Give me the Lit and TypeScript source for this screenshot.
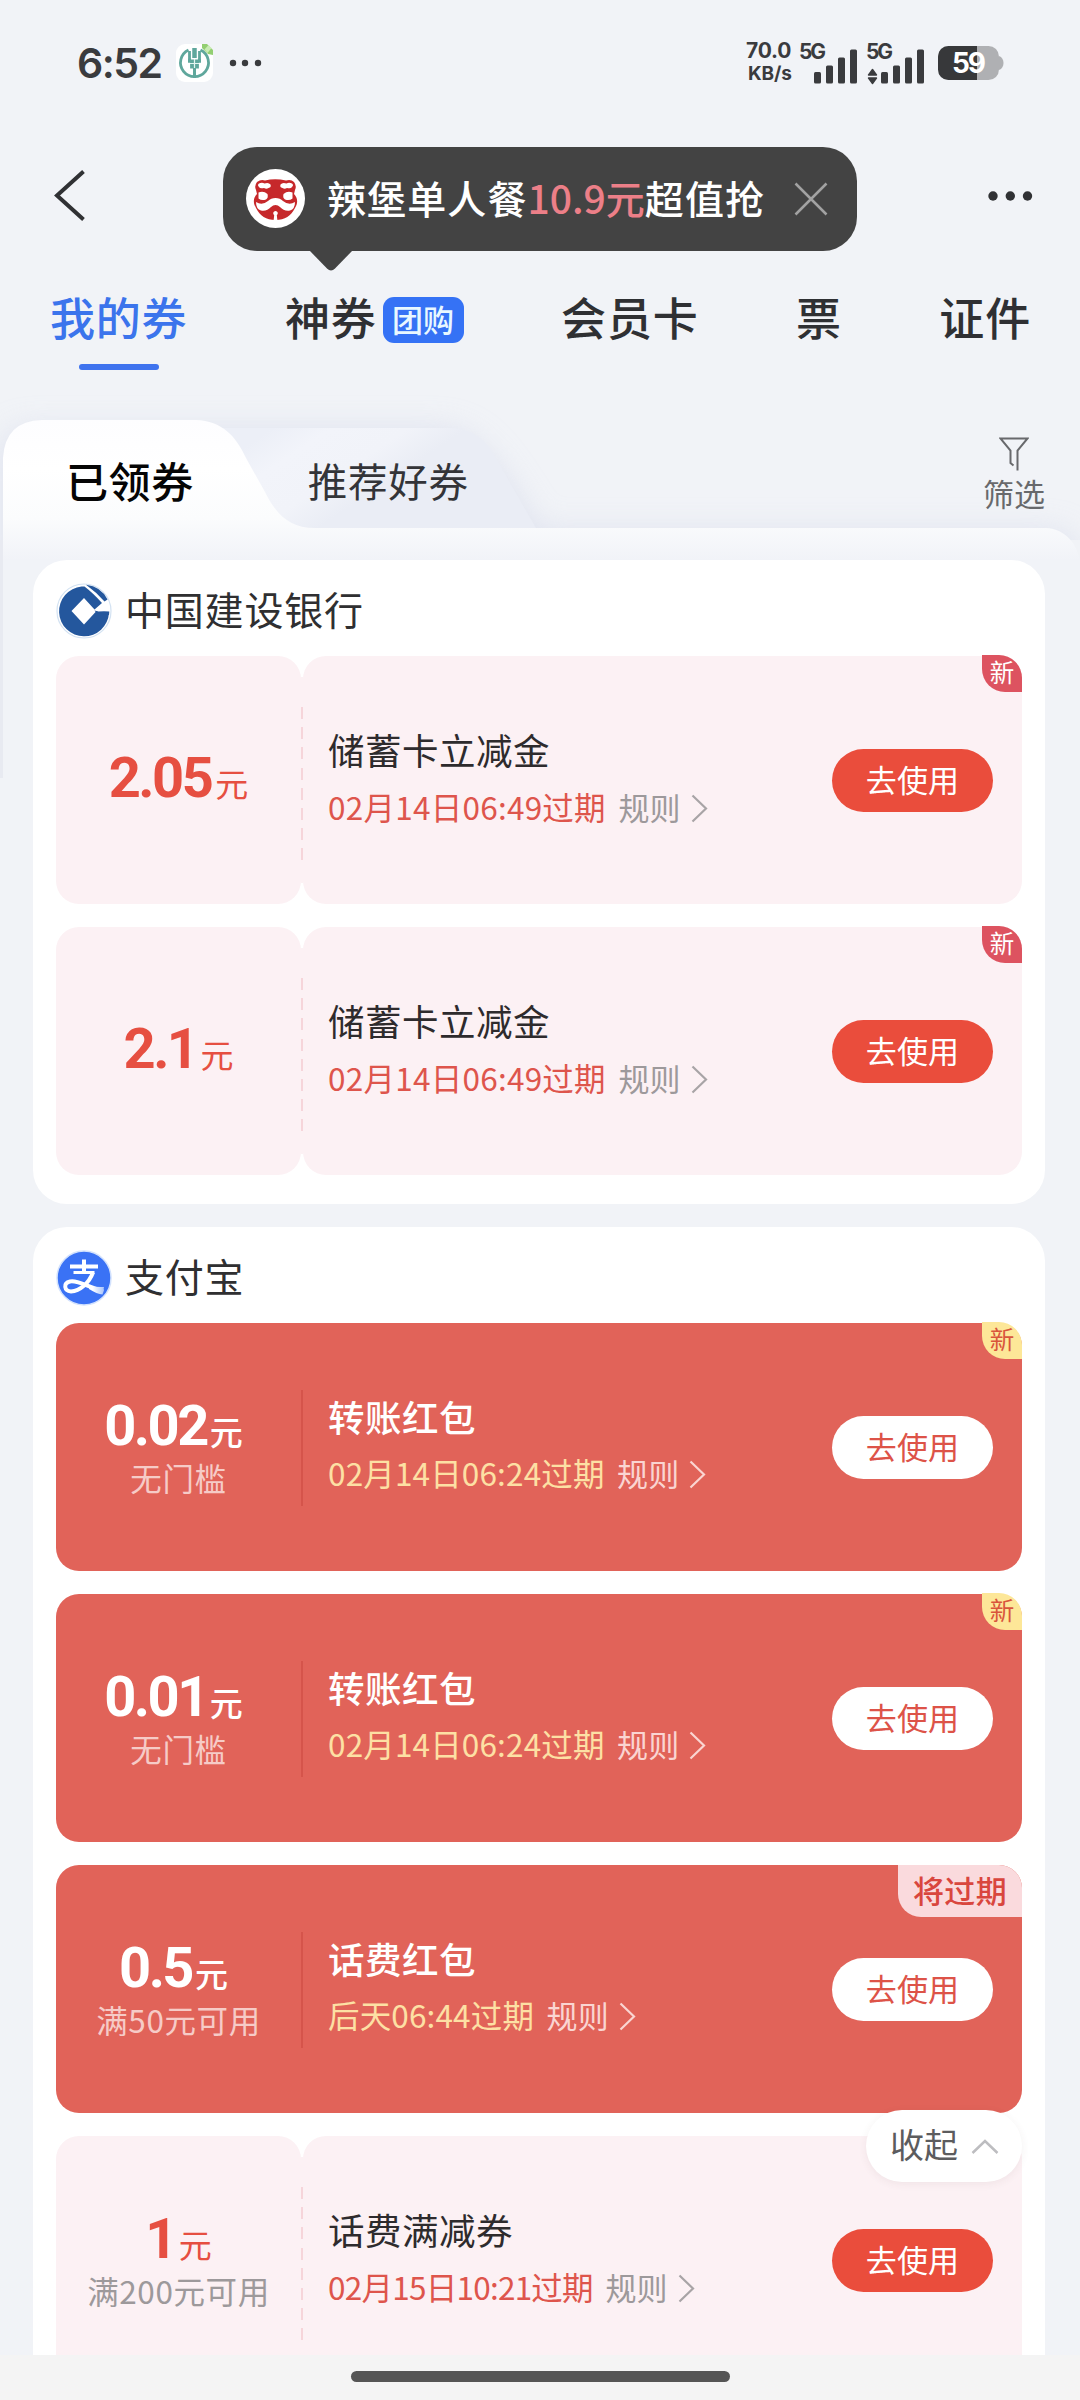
import { LitElement, html, css, svg, nothing } from "lit";
import { customElement, property } from "lit/decorators.js";
import { classMap } from "lit/directives/class-map.js";

interface Coupon {
  kind: "light" | "solid";
  amount: string;
  condition?: string;
  title: string;
  expiry: string;
  tight?: boolean;
  badge?: "new" | "soon";
}

interface Group {
  logo: "ccb" | "alipay";
  name: string;
  coupons: Coupon[];
}

const GROUPS: Group[] = [
  {
    logo: "ccb",
    name: "中国建设银行",
    coupons: [
      { kind: "light", amount: "2.05", title: "储蓄卡立减金", expiry: "02月14日06:49过期", badge: "new" },
      { kind: "light", amount: "2.1", title: "储蓄卡立减金", expiry: "02月14日06:49过期", badge: "new" },
    ],
  },
  {
    logo: "alipay",
    name: "支付宝",
    coupons: [
      { kind: "solid", amount: "0.02", condition: "无门槛", title: "转账红包", expiry: "02月14日06:24过期", badge: "new" },
      { kind: "solid", amount: "0.01", condition: "无门槛", title: "转账红包", expiry: "02月14日06:24过期", badge: "new" },
      { kind: "solid", amount: "0.5", condition: "满50元可用", title: "话费红包", expiry: "后天06:44过期", badge: "soon" },
      { kind: "light", amount: "1", condition: "满200元可用", title: "话费满减券", expiry: "02月15日10:21过期", tight: true },
    ],
  },
];

const FONT = css`"Noto Sans CJK SC", "Noto Sans", sans-serif`;

@customElement("status-bar")
export class StatusBar extends LitElement {
  static styles = css`
    :host {
      display: flex;
      align-items: center;
      justify-content: space-between;
      height: 126px;
      padding: 0 76px 0 77px;
      color: #3a3b3e;
      font-family: Inter, ${FONT};
    }
    .left,
    .right {
      display: flex;
      align-items: center;
    }
    .time {
      font-size: 41px;
      font-weight: 600;
      line-height: 50px;
      letter-spacing: -1.5px;
      width: 99px;
    }
    .app {
      width: 37px;
      height: 38px;
    }
    .more {
      width: 34px;
      height: 8px;
      margin-left: 16px;
    }
    .speed {
      display: flex;
      flex-direction: column;
      font-weight: 700;
      font-size: 21px;
      line-height: 24px;
      width: 53px;
      letter-spacing: -0.2px;
      padding-bottom: 3px;
    }
    .speed .unit {
      font-size: 19px;
      line-height: 22px;
      padding-left: 2px;
      letter-spacing: -0.1px;
    }
    .sim {
      width: 67px;
      height: 46px;
    }
    .sim text {
      font-family: Inter, sans-serif;
      font-weight: 700;
      font-size: 21px;
      fill: #3a3b3e;
    }
    .battery {
      width: 66px;
      height: 34px;
      margin-left: 5px;
    }
    .battery text {
      font-family: Inter, sans-serif;
      font-weight: 700;
      font-size: 28px;
      fill: #fff;
    }
  `;

  private sim(arrows: boolean) {
    return html`<svg class="sim" viewBox="0 0 67 46" fill="#3a3b3e">
      <text x="0" y="19" textLength="27">5G</text>
      ${arrows ? svg`<path d="M6.500 29.500l4 5.500h-8zM6.500 43.500l4-5.500h-8z" stroke="#3a3b3e" stroke-width="1.400" stroke-linejoin="round" />` : nothing}
      <rect x="15" y="32" width="7" height="11.500" rx="1.500" />
      <rect x="27" y="25.500" width="7" height="18" rx="1.500" />
      <rect x="39" y="17.500" width="7" height="26" rx="1.500" />
      <rect x="51" y="9.500" width="7" height="34" rx="1.500" />
    </svg>`;
  }

  render() {
    return html`
      <div class="left">
        <span class="time">6:52</span>
        <svg class="app" viewBox="0 0 37 38">
          <rect width="37" height="38" rx="9" fill="#fff" />
          <g fill="none" stroke="#5fa79c">
            <path d="M12.500 6A14 14 0 1 0 24.500 6" stroke-width="2.800" />
            <path d="M18.500 4v10" stroke-width="4.500" />
            <path d="M13.500 7v9M23.500 7v9" stroke-width="2.800" />
            <path d="M16 15.500v9M21 15.500v9" stroke-width="3.800" />
            <path d="M12 16.800h3M22 16.800h3" stroke-width="4" />
            <path d="M18.500 24v10" stroke-width="3" />
          </g>
          <path d="M14 19.500h9M18.500 15v9" stroke="#e4f6f1" stroke-width="1" />
          <path d="M26 0l5 0 6 6v5l-5-1-6-6z" fill="#93cf72" />
          <path d="M28.500 5.500l4-4.500 3 3-4 5z" fill="#c9ecb4" />
        </svg>
        <svg class="more" viewBox="0 0 34 8" fill="#3a3b3e">
          <circle cx="4" cy="4" r="3.200" /><circle cx="16" cy="4" r="3.200" /><circle cx="29" cy="4" r="3.200" />
        </svg>
      </div>
      <div class="right">
        <span class="speed"><span>70.0</span><span class="unit">KB/s</span></span>
        ${this.sim(false)} ${this.sim(true)}
        <svg class="battery" viewBox="0 0 66 34">
          <defs><clipPath id="cell"><rect width="61" height="34" rx="10.500" /></clipPath></defs>
          <g clip-path="url(#cell)">
            <rect width="61" height="34" fill="#afb0b3" />
            <rect width="39" height="34" fill="#37383a" />
          </g>
          <path d="M61 10c6 2 6 12 0 14z" fill="#afb0b3" />
          <text x="14" y="27" textLength="34">59</text>
        </svg>
      </div>
    `;
  }
}

@customElement("nav-bar")
export class NavBar extends LitElement {
  static styles = css`
    :host {
      display: flex;
      align-items: flex-start;
      height: 152px;
      font-family: ${FONT};
    }
    .back {
      width: 31px;
      height: 51px;
      margin: 44px 138px 0 54px;
    }
    .tip {
      position: relative;
      display: flex;
      align-items: center;
      box-sizing: border-box;
      width: 634px;
      height: 104px;
      margin-top: 20.500px;
      padding: 0 29px 0 23px;
      border-radius: 34px;
      background: #434343;
    }
    .tail {
      position: absolute;
      left: 86px;
      top: 103px;
      width: 44px;
      height: 22px;
    }
    .avatar {
      width: 59px;
      height: 59px;
      margin-right: 22px;
    }
    .text {
      flex: 1;
      display: flex;
      white-space: nowrap;
      font-size: 39px;
      font-weight: 500;
      letter-spacing: 1.1px;
      line-height: 60px;
      color: #fff;
      padding-bottom: 4px;
    }
    .price {
      color: #ec7f88;
      letter-spacing: 0;
    }
    .close {
      width: 34px;
      height: 34px;
    }
    .more {
      width: 46px;
      height: 12px;
      margin: 64px 0 0 130px;
    }
  `;

  render() {
    return html`
      <svg class="back" viewBox="0 0 31 51">
        <path d="M29.500 1.500L3 25.500l26.500 24" fill="none" stroke="#303134" stroke-width="4" />
      </svg>
      <div class="tip">
        <svg class="avatar" viewBox="0 0 59 59">
          <circle cx="29.500" cy="29.500" r="29.500" fill="#fff" />
          <path
            d="M11 13q4-3 8-1.500 10-2.500 21 0 5-1.500 8 1.500 3 4 1 8l-1 4c4 4 4 9 1 14-4 8-10 12-19.500 12S14 47 10 39c-3-5-3-10 1-14l-1-4q-2-4 1-8z"
            fill="#c6282b"
          />
          <path d="M13 14.500q3-1.500 5.500 0 4-1.500 6 1 1 3-2 3.500-2 1.500-4.500 0-4 1-5-1-2-2 0-3.500zM46 14.500q-3-1.500-5.500 0-4-1.500-6 1-1 3 2 3.500 2 1.500 4.500 0 4 1 5-1 2-2 0-3.500z" fill="#fff" />
          <path d="M12.500 23.500q5-2 9 1.500 1 4-1.500 5.500-4.500 1.500-7.500-1zM46.500 23.500q-5-2-9 1.500-1 4 1.500 5.500 4.500 1.500 7.500-1z" fill="#fff" />
          <path d="M10 33q6 4 12-1 3-3 7.500-3t7.500 3q6 5 12 1 0 7-5 8.500-6 1-10-3.500-2-2-4.500-2t-4.500 2q-4 4.500-10 3.500-5-1.500-5-8.500z" fill="#fff" />
          <path d="M29.500 42a2.300 2.300 0 0 1 1.300 4.200l.7 6h-4l.7-6a2.300 2.300 0 0 1 1.300-4.200z" fill="#fff" />
        </svg>
        <span class="text">辣堡单人餐<span class="price">10.9元</span>超值抢</span>
        <svg class="close" viewBox="0 0 34 34">
          <path d="M1.500 1.500l31 31M32.500 1.500l-31 31" stroke="#a2a2a2" stroke-width="2.500" />
        </svg>
        <svg class="tail" viewBox="0 0 44 22">
          <path d="M0 0h44L26 18.500q-4 4-8 0z" fill="#434343" />
        </svg>
      </div>
      <svg class="more" viewBox="0 0 46 12" fill="#303134">
        <circle cx="6" cy="6" r="4.700" /><circle cx="23.300" cy="6" r="4.700" /><circle cx="40.500" cy="6" r="4.700" />
      </svg>
    `;
  }
}

@customElement("coupon-card")
export class CouponCard extends LitElement {
  @property({ attribute: false }) coupon!: Coupon;

  static styles = css`
    :host {
      display: block;
      font-family: ${FONT};
    }
    .card {
      position: relative;
      display: flex;
      height: 248px;
    }
    .value,
    .body {
      display: flex;
      border-radius: 23px;
      box-sizing: border-box;
    }
    .value {
      width: 245px;
      flex-direction: column;
      align-items: center;
      justify-content: center;
    }
    .body {
      flex: 1;
      align-items: center;
      justify-content: space-between;
      padding: 0 29px 0 25px;
    }
    .light .value,
    .light .body {
      background: #fcf1f4;
    }
    .solid {
      background: #e16359;
      border-radius: 23px;
    }
    .split {
      width: 2px;
    }
    .light .split {
      height: 206px;
      margin-top: 21px;
      background:
        repeating-linear-gradient(#f6d5da 0 12px, #fcf1f4 12px 20.200px) 0 30px / 2px 154px no-repeat,
        #fcf1f4;
    }
    .solid .split {
      height: 116px;
      margin-top: 67px;
      background: #d5544b;
    }
    .amount {
      display: flex;
      align-items: baseline;
      height: 64px;
      line-height: 68px;
      font-family: Roboto, ${FONT};
      font-weight: 700;
      font-size: 56px;
      letter-spacing: -2.5px;
      color: #e64f41;
    }
    .yuan {
      font-family: ${FONT};
      font-weight: 400;
      font-size: 33px;
      margin-left: 4px;
      letter-spacing: 0;
      line-height: 40px;
    }
    .bare {
      padding-bottom: 8px;
    }
    .condition {
      height: 46px;
      line-height: 43px;
      font-size: 31.500px;
      letter-spacing: 0.6px;
      color: #9d999b;
    }
    .solid .amount {
      color: #fff;
      padding-right: 10px;
    }
    .solid .yuan {
      font-weight: 500;
      margin-left: 3px;
    }
    .solid .condition {
      color: #f6cbc7;
    }
    .info {
      display: flex;
      flex-direction: column;
      white-space: nowrap;
    }
    .title {
      height: 57px;
      line-height: 53px;
      font-size: 36.500px;
      letter-spacing: 0.5px;
      color: #2e2b2d;
    }
    .solid .title {
      color: #fff;
      font-weight: 500;
    }
    .meta {
      display: flex;
      align-items: center;
      height: 57px;
      line-height: 53px;
      font-size: 31.500px;
      letter-spacing: 0.25px;
      color: #de554c;
    }
    .meta span {
      padding-bottom: 4px;
    }
    .tight .expiry {
      letter-spacing: -0.75px;
    }
    .rule {
      margin-left: 12.500px;
      font-size: 31px;
      color: #9d999b;
    }
    .chevron {
      width: 17px;
      height: 29px;
      margin-left: 10px;
      stroke: #a8a4a6;
    }
    .solid .meta {
      color: #fde0a4;
      height: 55px;
      padding-bottom: 2px;
      letter-spacing: 0.15px;
    }
    .solid .rule {
      color: #fad5d2;
    }
    .solid .chevron {
      stroke: #fad5d2;
    }
    .use {
      border: 0;
      width: 161px;
      height: 63px;
      border-radius: 32px;
      padding: 0 0 4px;
      background: #ea4d3c;
      color: #fff;
      font: 400 31px/59px ${FONT};
      letter-spacing: 0.2px;
    }
    .solid .use {
      background: #fff;
      color: #dd5348;
    }
    .badge {
      position: absolute;
      right: 0;
      top: -1px;
      width: 40px;
      height: 37px;
      border-radius: 0 23px 0 23px;
      background: #dd5360;
      color: #fff;
      font-size: 24.500px;
      line-height: 34px;
      text-align: center;
    }
    .solid .badge {
      background: #fde798;
      color: #d9553c;
    }
    .solid .soon {
      top: 0;
      width: 124px;
      height: 52px;
      background: #fadadd;
      color: #d9463e;
      font-size: 31px;
      letter-spacing: 0.4px;
      font-weight: 500;
      line-height: 50px;
    }
  `;

  render() {
    const c = this.coupon;
    return html`
      <div class=${classMap({ card: true, [c.kind]: true })}>
        <div class=${classMap({ value: true, bare: !c.condition })}>
          <div class="amount">${c.amount}<span class="yuan">元</span></div>
          ${c.condition ? html`<div class="condition">${c.condition}</div>` : nothing}
        </div>
        <div class="split"></div>
        <div class="body">
          <div class="info">
            <div class="title">${c.title}</div>
            <div class=${classMap({ meta: true, tight: !!c.tight })}>
              <span class="expiry">${c.expiry}</span><span class="rule">规则</span>
              <svg class="chevron" viewBox="0 0 17 29">
                <path d="M1.500 1.500L15 14.500 1.500 27.500" fill="none" stroke-width="2.200" />
              </svg>
            </div>
          </div>
          <button class="use">去使用</button>
        </div>
        ${c.badge
          ? html`<div class=${classMap({ badge: true, soon: c.badge === "soon" })}>${c.badge === "soon" ? "将过期" : "新"}</div>`
          : nothing}
      </div>
    `;
  }
}

@customElement("coupon-group")
export class CouponGroup extends LitElement {
  @property({ attribute: false }) group!: Group;

  static styles = css`
    :host {
      display: flex;
      flex-direction: column;
      gap: 23px;
      padding: 0 23px 29px;
      border-radius: 34px;
      background: #fff;
      font-family: ${FONT};
    }
    .head {
      display: flex;
      align-items: center;
      height: 73px;
      box-sizing: border-box;
    }
    .logo {
      width: 56px;
      height: 56px;
      margin: 29px 13px 0 0;
    }
    .name {
      font-size: 39px;
      letter-spacing: 0.8px;
      line-height: 60px;
      color: #2f2f31;
      padding-top: 23px;
    }
  `;

  private logo() {
    return this.group.logo === "ccb"
      ? html`<svg class="logo" viewBox="0 0 56 56">
          <circle cx="28" cy="28" r="27" fill="#fff" stroke="#d3e2f2" stroke-width="1.200" />
          <path
            d="M25.500 3.500A25 25 0 1 0 53 30Q48 28.500 42.500 29.500L40.500 28 28 41.500 15.500 28 28 15 38.500 26.500 46 20Q37 10 28.500 3.500z"
            fill="#24579d"
          />
          <path d="M38.500 27.500L42.500 28.500Q48 28 53.300 28.500L53 32 40.500 30z" fill="#24579d" />
          <path d="M30 1.800Q45 3.500 51.500 16.500L48.500 18.500Q40 9 30 1.800z" fill="#24579d" />
        </svg>`
      : html`<svg class="logo" viewBox="0 0 56 56">
          <defs>
            <linearGradient id="tail" gradientUnits="userSpaceOnUse" x1="10" x2="48" y1="0" y2="0"><stop offset=".7" stop-color="#fff" /><stop offset="1" stop-color="#a9c4fb" /></linearGradient>
          </defs>
          <circle cx="28" cy="28" r="27" fill="#3a72f5" stroke="#d3e2fd" stroke-width="1.500" />
          <g fill="none" stroke="#fff" stroke-width="4">
            <path d="M14 16.500h28M28 9.500v13" />
            <path d="M17.500 22.500h21" stroke-width="3" />
            <path d="M37 22.500C33 33 24 41 15 41.500 8 41 7 33 14 31.500 21 30 30 36 47.500 41.500" stroke="url(#tail)" stroke-width="4" />
          </g>
          <path d="M33 35.500Q40 37.500 48 37l-1.500 7.500Q41 44 33 39z" fill="url(#tail)" />
        </svg>`;
  }

  render() {
    return html`
      <div class="head">${this.logo()}<span class="name">${this.group.name}</span></div>
      ${this.group.coupons.map((c) => html`<coupon-card .coupon=${c}></coupon-card>`)}
    `;
  }
}

@customElement("app-root")
export class AppRoot extends LitElement {
  static styles = css`
    :host {
      display: flex;
      flex-direction: column;
      width: 1080px;
      height: 2400px;
      overflow: hidden;
      position: relative;
      background: #f1f3f7;
      font-family: ${FONT};
    }
    .tabs {
      display: flex;
      height: 102px;
      padding: 0 49px 0 50px;
      justify-content: space-between;
      color: #2f3033;
      font-size: 45px;
      font-weight: 500;
      letter-spacing: 0.8px;
      line-height: 78px;
    }
    .tab {
      display: flex;
      flex-direction: column;
      align-items: center;
    }
    .tab.active {
      color: #3b74ec;
    }
    .tab.active::after {
      content: "";
      width: 80px;
      height: 6px;
      margin-top: 8px;
      border-radius: 3px;
      background: #3f73ee;
    }
    .label {
      display: flex;
      align-items: center;
    }
    .tag {
      width: 81px;
      height: 46px;
      margin: 5px 0 0 6px;
      border-radius: 11px;
      background: #3572f5;
      color: #e9f8ff;
      font-size: 31px;
      letter-spacing: 0;
      line-height: 44px;
      text-align: center;
    }
    .panel {
      flex: 1;
      min-height: 0;
      display: flex;
      flex-direction: column;
      position: relative;
    }
    .shape {
      position: absolute;
      left: 0;
      top: 0;
      width: 1080px;
      height: 420px;
    }
    .subtabs {
      position: relative;
      display: flex;
      align-items: flex-start;
      height: 180px;
    }
    .sub {
      margin-top: 70px;
      line-height: 60px;
    }
    .mine {
      margin-left: 66px;
      font-size: 42px;
      font-weight: 500;
      letter-spacing: 0.6px;
      color: #050505;
    }
    .picks {
      margin-left: 114px;
      font-size: 39.500px;
      letter-spacing: 0.7px;
      color: #333438;
    }
    .filter {
      display: flex;
      flex-direction: column;
      align-items: center;
      margin: 57px 35px 0 auto;
      font-size: 31px;
      line-height: 38px;
      color: #68696c;
    }
    .funnel {
      width: 30px;
      height: 34px;
      margin-bottom: 3px;
    }
    .groups {
      position: relative;
      display: flex;
      flex-direction: column;
      flex: 1;
      min-height: 0;
      overflow: hidden;
      gap: 23px;
      padding: 0 35px 0 33px;
    }
    coupon-group {
      flex: none;
    }
    .fold {
      position: absolute;
      right: 58px;
      top: 2110px;
      display: flex;
      align-items: center;
      box-sizing: border-box;
      width: 156px;
      height: 72px;
      padding-left: 24px;
      border-radius: 36px;
      background: #fff;
      box-shadow: 0 2px 8px rgba(90, 50, 60, 0.07);
      color: #5c5c5e;
      font-size: 34px;
      line-height: 68px;
    }
    .fold span {
      padding-bottom: 4px;
    }
    .up {
      width: 28px;
      height: 15px;
      margin-left: 13px;
    }
    .home {
      display: flex;
      justify-content: center;
      align-items: flex-start;
      height: 45px;
      background: #f4f4f4;
    }
    .home::before {
      content: "";
      width: 379px;
      height: 11px;
      margin-top: 16px;
      border-radius: 6px;
      background: #555;
    }
  `;

  render() {
    return html`
      <status-bar></status-bar>
      <nav-bar></nav-bar>
      <div class="tabs">
        <div class="tab active"><span>我的券</span></div>
        <div class="tab"><span class="label">神券<span class="tag">团购</span></span></div>
        <div class="tab">会员卡</div>
        <div class="tab">票</div>
        <div class="tab">证件</div>
      </div>
      <div class="panel">
        <svg class="shape" viewBox="0 380 1080 420">
          <defs>
            <linearGradient id="front" gradientUnits="userSpaceOnUse" x1="0" y1="420" x2="0" y2="560">
              <stop offset="0" stop-color="#fdfdff" /><stop offset=".35" stop-color="#fff" />
              <stop offset=".7" stop-color="#fbfcfd" /><stop offset="1" stop-color="#f1f3f8" />
            </linearGradient>
            <linearGradient id="rear" gradientUnits="userSpaceOnUse" x1="240" y1="450" x2="300" y2="540">
              <stop offset="0" stop-color="#eceff7" /><stop offset=".3" stop-color="#f2f4fa" />
              <stop offset=".7" stop-color="#f1f3f9" /><stop offset="1" stop-color="#eaedf5" />
            </linearGradient>
            <filter id="glow" filterUnits="userSpaceOnUse" x="-60" y="360" width="1200" height="260">
              <feGaussianBlur stdDeviation="15" />
            </filter>
            <clipPath id="above"><rect x="0" y="380" width="1080" height="160" /></clipPath>
          </defs>
          <g clip-path="url(#above)">
            <path
              d="M30 428H440C480 430 500 467 540 530H1050Q1080 532 1084 570H0V460Q4 428 30 428z"
              fill="#d0d6e8" opacity=".55" filter="url(#glow)"
            />
          </g>
          <path d="M200 428H450C475 429 487 441 497 460L537 530H200z" fill="url(#rear)" />
          <path
            d="M3 570V458Q5 421 42 420H196C222 421 236 436 246 458L265 492C276 514 289 528 315 528H1046C1066 529 1078 545 1080 562V570z"
            fill="url(#front)"
          />
          <path d="M1.500 540V778" stroke="#e8eaf1" stroke-width="3" />
        </svg>
        <div class="subtabs">
          <span class="sub mine">已领券</span>
          <span class="sub picks">推荐好券</span>
          <div class="filter">
            <svg class="funnel" viewBox="0 0 30 34">
              <path d="M18.500 33.500V13.500L28.500 1.500H1.500L11.500 13.500V26l3 2.500" fill="none" stroke="#68696c" stroke-width="2" />
            </svg>
            筛选
          </div>
        </div>
        <div class="groups">${GROUPS.map((g) => html`<coupon-group .group=${g}></coupon-group>`)}</div>
      </div>
      <div class="home"></div>
      <div class="fold">
        <span>收起</span>
        <svg class="up" viewBox="0 0 28 15">
          <path d="M1.500 14L14 2l12.500 12" fill="none" stroke="#bdbdc0" stroke-width="2.500" />
        </svg>
      </div>
    `;
  }
}
